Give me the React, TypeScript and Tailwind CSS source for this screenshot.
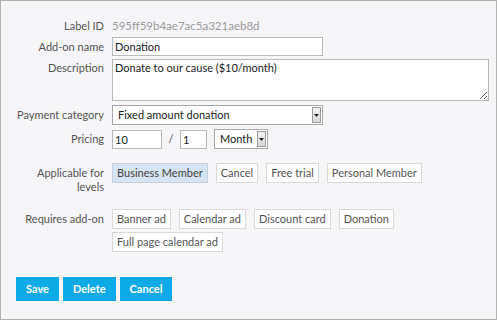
const levels = [
  { name: 'Business Member', active: true },
  { name: 'Cancel', active: false },
  { name: 'Free trial', active: false },
  { name: 'Personal Member', active: false },
];

const addons = ['Banner ad', 'Calendar ad', 'Discount card', 'Donation', 'Full page calendar ad'];

function Label({ children, className = '' }: { children: React.ReactNode; className?: string }) {
  return <div className={`w-[103px] shrink-0 text-right text-[11px] leading-[14px] text-[#555] ${className}`}>{children}</div>;
}

function SelectBox({ value, width }: { value: string; width: string }) {
  return (
    <div className={`flex h-[20px] items-stretch border border-[#a8a8a8] bg-white ${width}`}>
      <span className="flex-1 truncate pl-[5px] text-[11px] leading-[18px] text-[#222]">{value}</span>
      <span className="m-[1px] flex w-[9px] items-center justify-center border border-[#9c9c9c] bg-gradient-to-b from-[#f4f4f4] to-[#d8d8d8]">
        <svg width="5" height="3" viewBox="0 0 5 3">
          <path d="M0 0h5L2.5 3z" fill="#222" />
        </svg>
      </span>
    </div>
  );
}

function Tag({ name, active }: { name: string; active?: boolean }) {
  return (
    <span
      className={`inline-flex h-[20px] items-center border px-[4px] text-[11px] ${
        active ? 'border-[#c5d0dc] bg-[#d6e3f2] text-[#444]' : 'border-[#d9d9d9] bg-white text-[#555]'
      }`}
    >
      {name}
    </span>
  );
}

const inputCls = 'h-[19px] border border-[#b9b9b9] bg-white px-[2px] text-[11px] text-[#222] outline-none';

export default function App() {
  return (
    <div className="h-[320px] w-[497px] border border-[#b3b3b3] bg-[#f6f6f9] pt-[16px] font-['Lato','Liberation_Sans',sans-serif]">
      <div className="flex h-[18px] items-center gap-[8px]">
        <Label>Label ID</Label>
        <span className="text-[11.5px] text-[#9b9b9b]">595ff59b4ae7ac5a321aeb8d</span>
      </div>

      <div className="mt-[2px] flex items-center gap-[8px]">
        <Label>Add-on name</Label>
        <input defaultValue="Donation" className={`${inputCls} w-[211px]`} />
      </div>

      <div className="mt-[3px] flex items-start gap-[8px]">
        <Label className="pt-[2px]">Description</Label>
        <textarea
          defaultValue="Donate to our cause ($10/month)"
          className="h-[42px] w-[377px] resize border border-[#b9b9b9] bg-white px-[2px] py-0 text-[11px] leading-[15px] text-[#222] outline-none"
        />
      </div>

      <div className="mt-[4px] flex items-center gap-[8px]">
        <Label>Payment category</Label>
        <SelectBox value="Fixed amount donation" width="w-[211px]" />
      </div>

      <div className="mt-[4px] flex items-center gap-[8px]">
        <Label>Pricing</Label>
        <div className="flex items-center">
          <input defaultValue="10" className={`${inputCls} w-[50px]`} />
          <span className="w-[18px] text-center text-[11px] text-[#555]">/</span>
          <input defaultValue="1" className={`${inputCls} w-[27px]`} />
          <div className="ml-[7px]">
            <SelectBox value="Month" width="w-[54px]" />
          </div>
        </div>
      </div>

      <div className="mt-[14px] flex items-start gap-[8px]">
        <Label className="pt-[3px]">
          Applicable for
          <br />
          levels
        </Label>
        <div className="flex flex-wrap gap-x-[8px] gap-y-[4px]">
          {levels.map((l) => (
            <Tag key={l.name} name={l.name} active={l.active} />
          ))}
        </div>
      </div>

      <div className="mt-[15px] flex items-start gap-[8px]">
        <Label className="pt-[3px]">Requires add-on</Label>
        <div className="flex w-[300px] flex-wrap gap-x-[8px] gap-y-[3px]">
          {addons.map((a) => (
            <Tag key={a} name={a} />
          ))}
        </div>
      </div>

      <div className="ml-[15px] mt-[25px] flex gap-[4px]">
        {['Save', 'Delete', 'Cancel'].map((b) => (
          <button key={b} className="h-[24px] bg-[#0eaae8] px-[10px] text-[11px] font-bold text-white">
            {b}
          </button>
        ))}
      </div>
    </div>
  );
}
